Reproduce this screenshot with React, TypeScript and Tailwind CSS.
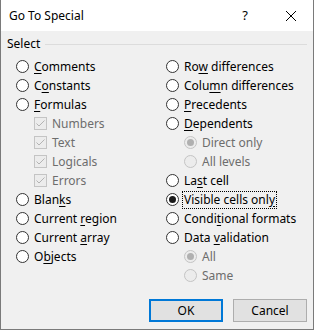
import type { ReactNode } from 'react'

type Item = {
  label: ReactNode
  kind: 'radio' | 'check'
  indent?: boolean
  disabled?: boolean
  checked?: boolean
  focused?: boolean
}

function U({ children }: { children: ReactNode }) {
  return <span className="underline underline-offset-[2px]">{children}</span>
}

const LEFT: Item[] = [
  { label: <><U>C</U>omments</>, kind: 'radio' },
  { label: <>C<U>o</U>nstants</>, kind: 'radio' },
  { label: <><U>F</U>ormulas</>, kind: 'radio' },
  { label: 'Numbers', kind: 'check', indent: true, disabled: true, checked: true },
  { label: 'Text', kind: 'check', indent: true, disabled: true, checked: true },
  { label: 'Logicals', kind: 'check', indent: true, disabled: true, checked: true },
  { label: 'Errors', kind: 'check', indent: true, disabled: true, checked: true },
  { label: <>Blan<U>k</U>s</>, kind: 'radio' },
  { label: <>Current <U>r</U>egion</>, kind: 'radio' },
  { label: <>Current <U>a</U>rray</>, kind: 'radio' },
  { label: <>O<U>b</U>jects</>, kind: 'radio' },
]

const RIGHT: Item[] = [
  { label: <>Ro<U>w</U> differences</>, kind: 'radio' },
  { label: <>Colu<U>m</U>n differences</>, kind: 'radio' },
  { label: <><U>P</U>recedents</>, kind: 'radio' },
  { label: <><U>D</U>ependents</>, kind: 'radio' },
  { label: 'Direct only', kind: 'radio', indent: true, disabled: true, checked: true },
  { label: 'All levels', kind: 'radio', indent: true, disabled: true },
  { label: <>La<U>s</U>t cell</>, kind: 'radio' },
  { label: <>Visible cells onl<U>y</U></>, kind: 'radio', checked: true, focused: true },
  { label: <>Condi<U>t</U>ional formats</>, kind: 'radio' },
  { label: <>Data <U>v</U>alidation</>, kind: 'radio' },
  { label: 'All', kind: 'radio', indent: true, disabled: true, checked: true },
  { label: 'Same', kind: 'radio', indent: true, disabled: true },
]

function Radio({ checked, disabled }: { checked?: boolean; disabled?: boolean }) {
  return (
    <span
      className={`w-[13px] h-[13px] rounded-full border flex items-center justify-center shrink-0 ${
        disabled ? 'border-[#c4c4c4] bg-[#ececec]' : 'border-[#333333] bg-white'
      }`}
    >
      {checked && (
        <span className={`w-[7px] h-[7px] rounded-full ${disabled ? 'bg-[#b0b0b0]' : 'bg-[#1a1a1a]'}`} />
      )}
    </span>
  )
}

function Check({ checked }: { checked?: boolean }) {
  return (
    <span className="w-[13px] h-[13px] border border-[#c4c4c4] bg-[#ececec] flex items-center justify-center shrink-0">
      {checked && (
        <svg width="11" height="11" viewBox="0 0 11 11">
          <path d="M1.5 5.5 L4 8 L9.5 2.5" fill="none" stroke="#b3b3b3" strokeWidth="1" />
        </svg>
      )}
    </span>
  )
}

function Row({ item }: { item: Item }) {
  return (
    <div className={`h-[19px] flex items-center ${item.indent ? 'pl-[18px]' : ''}`}>
      {item.kind === 'radio' ? (
        <Radio checked={item.checked} disabled={item.disabled} />
      ) : (
        <Check checked={item.checked} />
      )}
      <span
        className={`ml-[4px] px-[1px] leading-[16px] whitespace-nowrap ${
          item.disabled ? 'text-[#6d6d6d]' : 'text-black'
        } ${item.focused ? 'outline outline-1 outline-dotted outline-black' : ''}`}
      >
        {item.label}
      </span>
    </div>
  )
}

export default function App() {
  return (
    <div
      className="w-[314px] h-[330px] flex flex-col border-x border-b border-[#7a7a7a] bg-[#f0f0f0] text-[12px] text-black"
      style={{ fontFamily: '"Noto Sans", "Open Sans", sans-serif' }}
    >
      <div className="h-[31px] bg-white flex items-center shrink-0">
        <span className="pl-[8px] flex-1 text-[12px]">Go To Special</span>
        <span className="w-[46px] h-full flex items-center justify-center text-[13px]">?</span>
        <span className="w-[45px] h-full flex items-center justify-center">
          <svg width="10" height="10" viewBox="0 0 10 10">
            <path d="M0 0 L10 10 M10 0 L0 10" stroke="#000" strokeWidth="1" />
          </svg>
        </span>
      </div>

      <div className="pt-[6px] flex flex-col flex-1">
        <div className="h-[14px] flex items-center pl-[6px] pr-[6px]">
          <span>Select</span>
          <div className="flex-1 h-px bg-[#dcdcdc] ml-[5px]" />
        </div>

        <div className="mt-[6px] flex pl-[15px]">
          <div className="w-[150px] flex flex-col">
            {LEFT.map((it, i) => (
              <Row key={i} item={it} />
            ))}
          </div>
          <div className="flex flex-col">
            {RIGHT.map((it, i) => (
              <Row key={i} item={it} />
            ))}
          </div>
        </div>

        <div className="mt-auto mb-[7px] flex justify-end gap-[10px] pr-[6px]">
          <button className="w-[74px] h-[23px] bg-[#e1e1e1] border-2 border-[#0078d7] text-[12px]">OK</button>
          <button className="w-[74px] h-[23px] bg-[#e1e1e1] border border-[#adadad] text-[12px]">Cancel</button>
        </div>
      </div>
    </div>
  )
}
